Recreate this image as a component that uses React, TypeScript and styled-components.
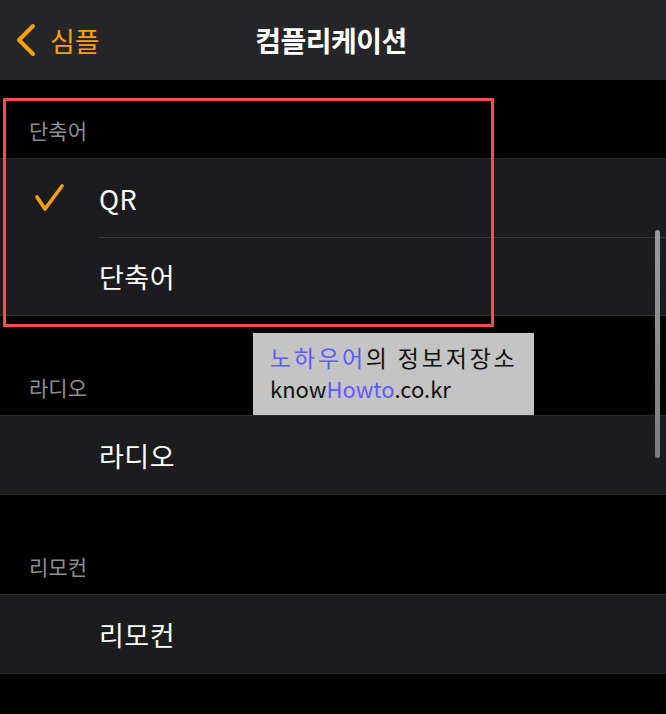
import styled, { createGlobalStyle } from 'styled-components';

const GlobalStyle = createGlobalStyle`
  html, body {
    margin: 0;
    padding: 0;
    background: #000;
  }
  body {
    font-family: 'Noto Sans CJK KR', 'Noto Sans', sans-serif;
  }
`;

const Screen = styled.div`
  position: relative;
  width: 666px;
  height: 714px;
  overflow: hidden;
  background: #000;
`;

const NavBar = styled.header`
  height: 80px;
  background: #262628;
  display: grid;
  grid-template-columns: 1fr auto 1fr;
  align-items: center;
`;

const BackButton = styled.div`
  display: flex;
  align-items: center;
  gap: 12px;
  padding-left: 14px;
  color: #f7a10d;
  font-size: 27px;
  line-height: 1;
`;

const Title = styled.h1`
  margin: 0 0 0 -4px;
  color: #fff;
  font-size: 28px;
  font-weight: 700;
  letter-spacing: -0.5px;
`;

const SectionHeader = styled.div<{ $first?: boolean }>`
  height: ${(p) => (p.$first ? 78 : 99)}px;
  box-sizing: border-box;
  display: flex;
  align-items: flex-end;
  padding: 0 0 14px 29px;
  color: #8e8e93;
  font-size: 21px;
  line-height: 28px;
`;

const Group = styled.div`
  background: #1c1c1e;
  border-top: 1px solid #2c2c2e;
  border-bottom: 1px solid #2c2c2e;
`;

const Row = styled.div`
  display: flex;
  height: 78px;
`;

const CheckSlot = styled.div`
  width: 99px;
  display: flex;
  align-items: center;
  padding-left: 34px;
  box-sizing: border-box;
`;

const RowBody = styled.div<{ $divider?: boolean }>`
  flex: 1;
  display: flex;
  align-items: center;
  color: #fff;
  font-size: 27px;
  letter-spacing: 0.5px;
  border-top: ${(p) => (p.$divider ? '1px solid #38383a' : 'none')};
`;

const Highlight = styled.div`
  position: absolute;
  left: 3px;
  top: 98px;
  width: 491px;
  height: 229px;
  box-sizing: border-box;
  border: 3px solid #fd4a4f;
`;

const ScrollThumb = styled.div`
  position: absolute;
  left: 655px;
  top: 230px;
  width: 5px;
  height: 228px;
  border-radius: 3px;
  background: linear-gradient(#9a9a9c, #7c7c7e);
`;

const Watermark = styled.div`
  position: absolute;
  left: 253px;
  top: 333px;
  width: 281px;
  height: 82px;
  box-sizing: border-box;
  padding: 9px 0 0 17px;
  background: #c4c4c4;
  color: #111;
  white-space: nowrap;
`;

const WatermarkLine = styled.div<{ $latin?: boolean }>`
  font-size: ${(p) => (p.$latin ? 22 : 23)}px;
  letter-spacing: ${(p) => (p.$latin ? 0 : 2.8)}px;
  line-height: 31px;
`;

const Blue = styled.span`
  color: #5b5bff;
`;

function Chevron() {
  return (
    <svg width="24" height="34" viewBox="0 0 24 34">
      <path d="M19 3 L5 17 L19 31" fill="none" stroke="#f7a10d" strokeWidth="4" strokeLinecap="round" strokeLinejoin="round" />
    </svg>
  );
}

function Check() {
  return (
    <svg width="30" height="28" viewBox="0 0 30 28">
      <path d="M3 13 L11 25 L28 2" fill="none" stroke="#f7a10d" strokeWidth="3.6" strokeLinecap="round" strokeLinejoin="round" />
    </svg>
  );
}

const sections = [
  { label: '단축어', items: ['QR', '단축어'], checked: 0 },
  { label: '라디오', items: ['라디오'], checked: -1 },
  { label: '리모컨', items: ['리모컨'], checked: -1 },
];

export default function App() {
  return (
    <Screen>
      <GlobalStyle />
      <NavBar>
        <BackButton>
          <Chevron />
          심플
        </BackButton>
        <Title>컴플리케이션</Title>
        <div />
      </NavBar>

      {sections.map((s, si) => (
        <div key={s.label}>
          <SectionHeader $first={si === 0}>{s.label}</SectionHeader>
          <Group>
            {s.items.map((item, i) => (
              <Row key={item}>
                <CheckSlot>{s.checked === i && <Check />}</CheckSlot>
                <RowBody $divider={i > 0}>{item}</RowBody>
              </Row>
            ))}
          </Group>
        </div>
      ))}

      <Highlight />
      <ScrollThumb />
      <Watermark>
        <WatermarkLine>
          <Blue>노하우어</Blue>의 정보저장소
        </WatermarkLine>
        <WatermarkLine $latin>
          know<Blue>Howto</Blue>.co.kr
        </WatermarkLine>
      </Watermark>
    </Screen>
  );
}
